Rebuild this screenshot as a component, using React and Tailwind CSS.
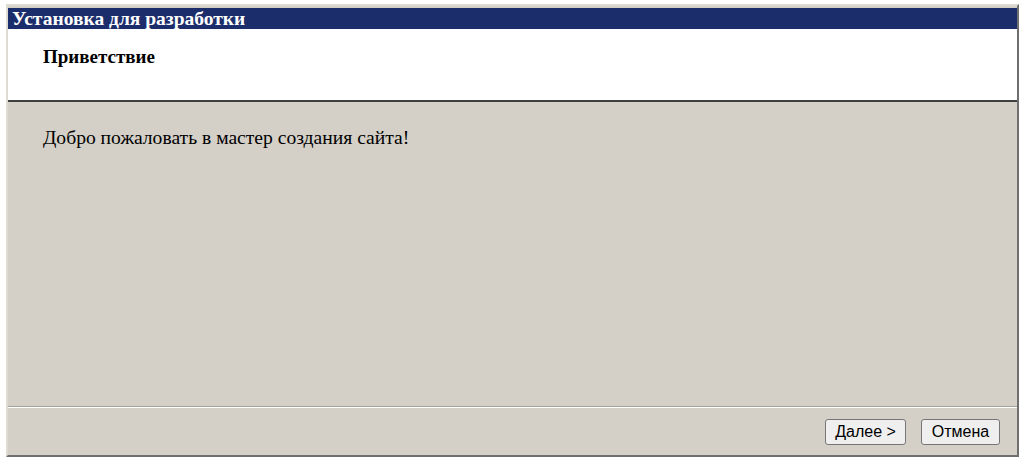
export default function App() {
  return (
    <div className="min-h-[464px] bg-white pl-[6px] pt-[4px]">
      <div
        className="flex h-[453px] w-[1013px] flex-col border-2 border-t-[#dedbd3] border-l-[#dedbd3] border-r-[#6f6f6f] border-b-[#6f6f6f] bg-[#d4d0c8]"
        style={{ fontFamily: '"Liberation Serif", serif' }}
      >
        <div className="mt-[2px] flex h-[21px] items-center bg-[#1c2d6b] px-1 text-[19.5px] font-bold leading-none text-white">
          Установка для разработки
        </div>
        <div className="flex h-[73px] items-center border-b-2 border-b-[#3f3f3f] bg-white pl-[35px] pb-[16px] text-[19px] font-bold leading-none text-black">
          Приветствие
        </div>
        <div className="flex-1 pl-[35px] pt-[24px] text-[19.6px] leading-[24px] text-black">
          Добро пожаловать в мастер создания сайта!
        </div>
        <div className="border-t border-b border-t-[#a6a39c] border-b-white" />
        <div
          className="flex h-[47px] items-center justify-end gap-[15px] pr-[17px]"
          style={{ fontFamily: '"Liberation Sans", sans-serif' }}
        >
          <button className="h-[26px] w-[81px] rounded-[3px] border border-[#767676] bg-[#efefef] text-[16px] text-black">
            Далее &gt;
          </button>
          <button className="h-[26px] w-[79px] rounded-[3px] border border-[#767676] bg-[#efefef] text-[16px] text-black">
            Отмена
          </button>
        </div>
      </div>
    </div>
  );
}
